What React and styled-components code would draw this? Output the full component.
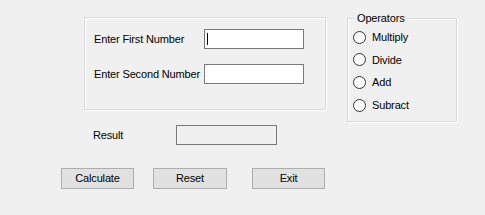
import React from "react";
import styled, { createGlobalStyle } from "styled-components";

const Global = createGlobalStyle`
  html, body { margin: 0; padding: 0; background: #f0f0f0; }
  body { font-family: "Liberation Sans", Arial, sans-serif; font-size: 11px; color: #000; letter-spacing: -0.15px; }
  * { box-sizing: border-box; }
`;

const Form = styled.div`
  width: 485px;
  height: 215px;
  background: #f0f0f0;
  padding-top: 17px;
`;

const TopRow = styled.div`
  display: flex;
  align-items: flex-start;
  padding-left: 84px;
  gap: 21px;
`;

const Panel = styled.div`
  width: 242px;
  height: 93px;
  border: 1px solid #d9d9d9;
  box-shadow: inset 1px 1px 0 #fff, 1px 1px 0 #fff;
  padding: 11px 0 0 9px;
  display: flex;
  flex-direction: column;
  gap: 15px;
`;

const FieldRow = styled.div`
  display: flex;
  align-items: center;
  height: 20px;
`;

const Label = styled.span`
  width: ${(p) => p.w}px;
  white-space: nowrap;
`;

const TextBox = styled.div`
  position: relative;
  width: ${(p) => p.w || 100}px;
  height: 20px;
  border: 1px solid #7a7a7a;
  background: ${(p) => (p.disabled ? "#f0f0f0" : "#fff")};
`;

const Caret = styled.div`
  position: absolute;
  left: 2px;
  top: 3px;
  width: 1px;
  height: 12px;
  background: #000;
`;

const Group = styled.div`
  position: relative;
  width: 110px;
  height: 104px;
  margin-top: 1px;
  border: 1px solid #d9d9d9;
  box-shadow: inset 1px 1px 0 #fff, 1px 1px 0 #fff;
  padding: 11px 0 0 5px;
  display: flex;
  flex-direction: column;
  gap: 8.7px;
`;

const Legend = styled.span`
  position: absolute;
  left: 7px;
  top: -8px;
  padding: 0 2px;
  background: #f0f0f0;
  line-height: 14px;
`;

const RadioRow = styled.label`
  display: flex;
  align-items: center;
  height: 14px;
  gap: 6px;
`;

const Circle = styled.span`
  width: 13px;
  height: 13px;
  border-radius: 50%;
  border: 1px solid #333;
  background: #fff;
  flex: none;
`;

const ResultRow = styled.div`
  display: flex;
  align-items: center;
  padding-left: 93px;
  margin-top: 3px;
`;

const ButtonRow = styled.div`
  display: flex;
  padding-left: 61px;
  margin-top: 23px;
`;

const Button = styled.button`
  width: ${(p) => p.w}px;
  height: 21px;
  margin-right: ${(p) => p.mr || 0}px;
  background: #e1e1e1;
  border: 1px solid #adadad;
  font-family: "Liberation Sans", Arial, sans-serif;
  font-size: 11px;
  letter-spacing: -0.15px;
  color: #000;
  padding: 0;
  line-height: 17px;
`;

export default function App() {
  return (
    <>
      <Global />
      <Form>
        <TopRow>
          <Panel>
            <FieldRow>
              <Label w={110}>Enter First Number</Label>
              <TextBox w={100}>
                <Caret />
              </TextBox>
            </FieldRow>
            <FieldRow>
              <Label w={110}>Enter Second Number</Label>
              <TextBox w={100} />
            </FieldRow>
          </Panel>
          <Group>
            <Legend>Operators</Legend>
            {["Multiply", "Divide", "Add", "Subract"].map((t) => (
              <RadioRow key={t}>
                <Circle />
                <span>{t}</span>
              </RadioRow>
            ))}
          </Group>
        </TopRow>
        <ResultRow>
          <Label w={83}>Result</Label>
          <TextBox w={101} disabled />
        </ResultRow>
        <ButtonRow>
          <Button w={73} mr={19}>Calculate</Button>
          <Button w={74} mr={25}>Reset</Button>
          <Button w={73}>Exit</Button>
        </ButtonRow>
      </Form>
    </>
  );
}
